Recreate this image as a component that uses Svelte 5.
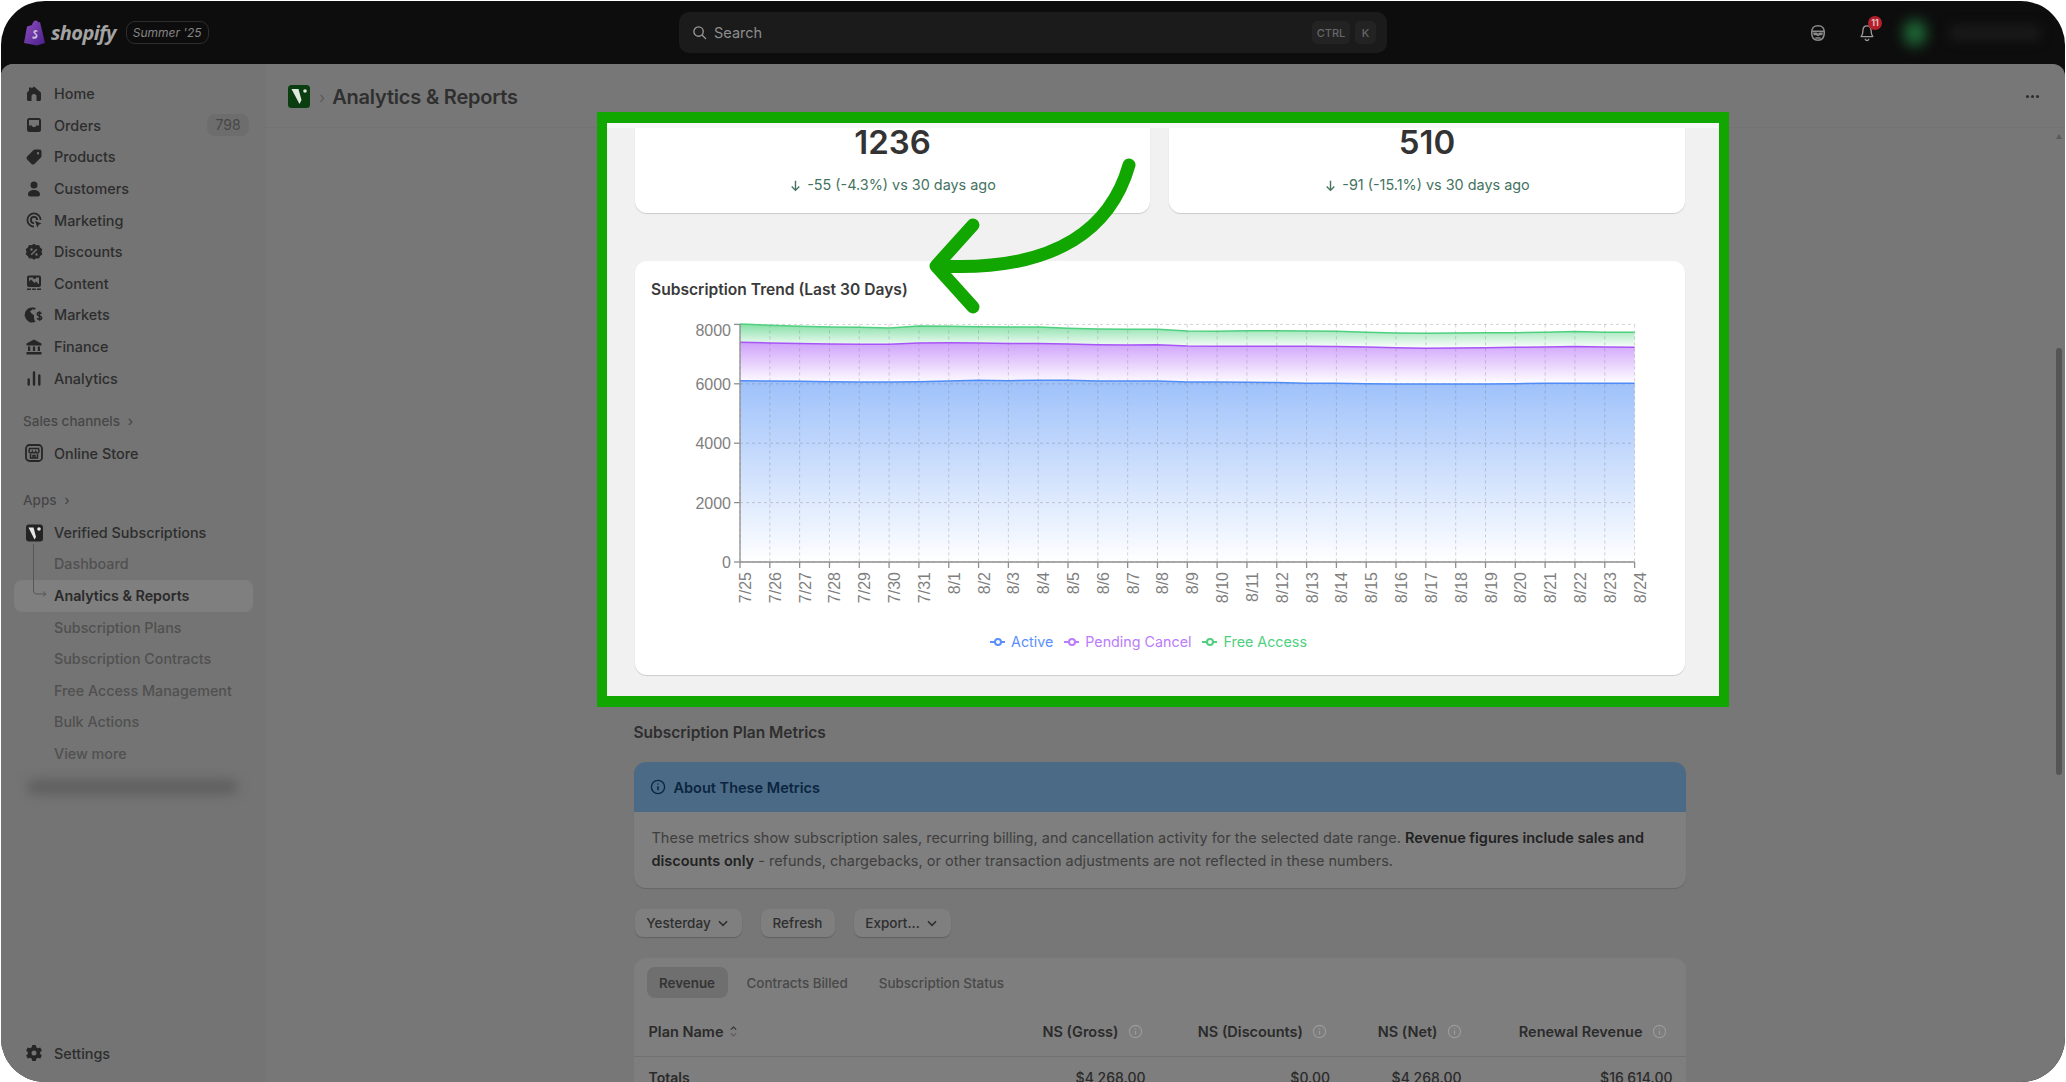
<script>
  const icons = {
    home: { d: 'M10 2.500 7.500 4.600V3.500H5v3.200L3.300 8.200c-.2.300-.3.600-.3 1v6.300c0 .8.700 1.500 1.500 1.500h3v-4.500a2.500 2.500 0 0 1 5 0V17h3c.8 0 1.500-.7 1.500-1.500V9.200c0-.4-.1-.7-.4-1z' },
    orders: { d: 'M5.500 3h9A2.500 2.500 0 0 1 17 5.500v9a2.500 2.500 0 0 1-2.500 2.500h-9A2.500 2.500 0 0 1 3 14.500v-9A2.500 2.500 0 0 1 5.500 3zM5 5v5.500h2.800l1 1.500h2.400l1-1.500H15V5z' },
    products: { d: 'M11 2.500h4.500a2 2 0 0 1 2 2V9c0 .5-.2 1-.6 1.400l-6.500 6.500a2 2 0 0 1-2.800 0l-4.500-4.500a2 2 0 0 1 0-2.800l6.500-6.500c.4-.4.9-.6 1.400-.6zM14 5a1.200 1.200 0 1 0 0 2.400A1.200 1.200 0 0 0 14 5z' },
    customers: { d: 'M10 2.500a3.500 3.500 0 1 1 0 7 3.500 3.500 0 0 1 0-7zM4 15.500c0-2.800 2.500-4.500 6-4.500s6 1.700 6 4.500c0 1-.8 2-2 2H6c-1.200 0-2-1-2-2z' },
    marketing: { d: 'M10 2.500a7.500 7.500 0 0 1 7.500 7.500h-1.800A5.700 5.700 0 1 0 10 15.700v1.800A7.500 7.500 0 0 1 10 2.500zM10 6a4 4 0 0 1 4 4h-1.800a2.200 2.200 0 1 0-2.200 2.200V14a4 4 0 0 1 0-8zM11 11l6.500 2.400-2.800 1.300-1.300 2.800z' },
    discounts: { d: 'M10 1.800l2.300 1.500 2.700-.2 1.100 2.500 2.200 1.600-.8 2.600.8 2.600-2.200 1.600-1.100 2.500-2.700-.2-2.300 1.500-2.300-1.500-2.700.2-1.100-2.500-2.200-1.600.8-2.600-.8-2.600 2.200-1.600L5 3.100l2.700.2zM12.300 6.700l-5.600 5.600 1 1 5.600-5.600zM7.500 6.300a1.200 1.200 0 1 0 0 2.400 1.200 1.200 0 0 0 0-2.400zM12.500 11.300a1.200 1.200 0 1 0 0 2.400 1.200 1.200 0 0 0 0-2.400z' },
    content: { d: 'M5 2.500h10a2 2 0 0 1 2 2v7.500a2 2 0 0 1-2 2H5a2 2 0 0 1-2-2V4.500a2 2 0 0 1 2-2zM5 7.500v1l2-2 3.500 3.500 1.500-1.500 3 3V4.500h-3a1.500 1.500 0 1 1-3 0H5zM3 15.500h4V17H3zM8.200 15.500h3.600V17H8.200zM13 15.500h4V17h-4z' },
    markets: { d: 'M9 2.500a7.500 7.500 0 0 1 3 .6c-.5.5-1 1-1.300 1.600L8.500 4.300 6 6.500l2 2.500 2 1v2.500c0 1.500.5 3 1.500 4.200A7.500 7.500 0 1 1 9 2.500z', s: 'M17.500 8.700c-.5-.8-1.300-1.200-2.200-1.200-1.100 0-2 .7-2 1.700 0 2.200 4.400 1.300 4.400 3.500 0 1-1 1.800-2.200 1.800-1 0-1.900-.5-2.400-1.300M15.500 6.300v9.400' },
    finance: { d: 'M10 2.500 2.500 6.500v2h15v-2zM4 9.500h2.200V14H4zM8.900 9.500h2.200V14H8.900zM13.800 9.500H16V14h-2.200zM2.500 15h15v2.500h-15z' },
    analytics: { d: 'M3.500 11.500a1.200 1.200 0 0 1 2.400 0v5a1.200 1.200 0 0 1-2.400 0zM8.800 4.500a1.200 1.200 0 0 1 2.400 0v12a1.200 1.200 0 0 1-2.400 0zM14.100 7.500a1.200 1.200 0 0 1 2.400 0v9a1.200 1.200 0 0 1-2.400 0z' },
    settings: { d: 'M8.300 2h3.400l.6 2.300 1.600.9 2.300-.7 1.700 3-1.700 1.600v1.800l1.700 1.600-1.700 3-2.300-.7-1.600.9-.6 2.300H8.300l-.6-2.300-1.600-.9-2.300.7-1.700-3 1.700-1.600V9.100L2.100 7.500l1.700-3 2.300.7 1.600-.9zM10 7.500a2.500 2.500 0 1 0 0 5 2.500 2.500 0 0 0 0-5z' }
  }

  const mainNav = [
    { label: 'Home', icon: 'home' },
    { label: 'Orders', icon: 'orders', badge: '798' },
    { label: 'Products', icon: 'products' },
    { label: 'Customers', icon: 'customers' },
    { label: 'Marketing', icon: 'marketing' },
    { label: 'Discounts', icon: 'discounts' },
    { label: 'Content', icon: 'content' },
    { label: 'Markets', icon: 'markets' },
    { label: 'Finance', icon: 'finance' },
    { label: 'Analytics', icon: 'analytics' }
  ]

  const subNav = ['Dashboard', 'Analytics & Reports', 'Subscription Plans', 'Subscription Contracts', 'Free Access Management', 'Bulk Actions', 'View more']

  const stats = [
    { value: '1236', delta: '-55 (-4.3%) vs 30 days ago' },
    { value: '510', delta: '-91 (-15.1%) vs 30 days ago' }
  ]

  // stacked totals per day, 7/25 to 8/24
  const activeTop = [6106, 6095, 6084, 6072, 6061, 6061, 6072, 6095, 6117, 6106, 6117, 6117, 6095, 6095, 6095, 6061, 6061, 6050, 6039, 6016, 6016, 6005, 5994, 5994, 5994, 5994, 6005, 6016, 6016, 6016, 6016]
  const pendingTop = [7397, 7374, 7352, 7340, 7329, 7329, 7374, 7385, 7374, 7352, 7352, 7340, 7318, 7307, 7318, 7273, 7262, 7262, 7262, 7262, 7251, 7240, 7217, 7195, 7206, 7217, 7228, 7240, 7251, 7240, 7228]
  const freeTop = [8014, 7969, 7935, 7913, 7901, 7879, 7946, 7935, 7924, 7913, 7913, 7868, 7845, 7834, 7834, 7778, 7767, 7789, 7789, 7778, 7767, 7733, 7711, 7700, 7711, 7722, 7722, 7733, 7756, 7733, 7733]

  const dates = []
  for (let i = 0; i < 7; i++) dates.push('7/' + (25 + i))
  for (let i = 1; i <= 24; i++) dates.push('8/' + i)

  const x0 = 105
  const stepX = 29.82
  const y0 = 252
  const px = (i) => x0 + i * stepX
  const py = (v) => y0 - v * 0.0297

  const line = (vals) => vals.map((v, i) => `${i ? 'L' : 'M'}${px(i).toFixed(1)} ${py(v).toFixed(1)}`).join(' ')
  const band = (top, bottom) => {
    const back = bottom.map((v, i) => [px(i).toFixed(1), py(v).toFixed(1)]).reverse()
    return line(top) + ' ' + back.map((p) => `L${p[0]} ${p[1]}`).join(' ') + ' Z'
  }
  const zeros = dates.map(() => 0)

  const yTicks = [8000, 6000, 4000, 2000, 0]
</script>

<div class="shell">
  <div class="window">
    <header class="topbar">
      <div class="brand">
        <svg class="bag" viewBox="0 0 22 26" width="22" height="26">
          <defs>
            <linearGradient id="bag" x1="0" y1="0" x2="1" y2="1">
              <stop offset="0" stop-color="#8f4fc0" />
              <stop offset="1" stop-color="#4a1f8c" />
            </linearGradient>
          </defs>
          <path d="M3 6.500 8 5c.6-2.500 2-4.500 4-4.500 1.300 0 2 1 2.200 2l1.800-.5L21 23l-8 2.500L0 23z" fill="url(#bag)" />
          <path d="M13.500 10.500c-.7-.5-1.500-.7-2.300-.5-1.700.3-2.500 2-1.400 3.200 1 1 2.300 1.500 1.900 2.800-.3 1-1.800 1-3 .3l-.5 2c1.500.8 4 .8 5-1 1.100-2-.5-3.300-1.600-4.300-.6-.6-.3-1.200.5-1.200.5 0 1 .1 1.300.3z" fill="#c8bcd8" />
        </svg>
        <span class="logotype">shopify</span>
        <span class="edition">Summer '25</span>
      </div>
      <div class="search">
        <svg viewBox="0 0 16 16" width="15" height="15" fill="none" stroke="#9a9a9a" stroke-width="1.400">
          <circle cx="7" cy="7" r="5" />
          <path d="m11 11 3.500 3.500" stroke-linecap="round" />
        </svg>
        <span class="search-text">Search</span>
        <span class="key key-ctrl">CTRL</span>
        <span class="key">K</span>
      </div>
      <div class="top-right">
        <svg viewBox="0 0 20 20" width="18" height="18" fill="none" stroke="#8a8a8a" stroke-width="1.800">
          <path d="M10 2c4.500 0 7 1.500 7 7.500S14.500 18 10 18s-7-2.500-7-8.500S5.500 2 10 2z" />
          <path d="M3.500 8h13" />
          <path d="M4.500 9.500h4.500l1 1.500 1-1.500h4.500l-.8 3H12l-2 1-2-1H5.300z" fill="#8a8a8a" stroke="none" />
          <path d="M7 15.500h6" />
        </svg>
        <div class="bell">
          <svg viewBox="0 0 20 22" width="18" height="20" fill="none" stroke="#9a9a9a" stroke-width="1.500">
            <path d="M10 3c-3 0-4.500 2.500-4.500 5 0 3.500-.5 5-2 7h13c-1.500-2-2-3.500-2-7 0-2.500-1.500-5-4.500-5z" stroke-linejoin="round" />
            <path d="M8 17.500a2 2 0 0 0 4 0" />
          </svg>
          <span class="bell-badge">11</span>
        </div>
        <span class="avatar"></span>
        <span class="account"></span>
      </div>
    </header>

    <div class="body">
      <aside class="sidebar">
        <nav class="nav">
          {#each mainNav as item}
            <div class="row">
              <svg class="icon" viewBox="0 0 20 20" width="20" height="20">
                <path d={icons[item.icon].d} fill-rule="evenodd" fill="currentColor" />
                {#if icons[item.icon].s}
                  <path d={icons[item.icon].s} fill="none" stroke="currentColor" stroke-width="1.500" />
                {/if}
              </svg>
              <span>{item.label}</span>
              {#if item.badge}<span class="badge">{item.badge}</span>{/if}
            </div>
          {/each}

          <div class="section-label sales">Sales channels <span class="caret">›</span></div>
          <div class="row">
            <svg class="icon" viewBox="0 0 20 20" width="20" height="20" fill="none" stroke="currentColor" stroke-width="1.500">
              <rect x="2" y="2" width="16" height="16" rx="3.500" stroke-width="1.800" />
              <path d="M5.500 5.500h9l.5 3a1.700 1.700 0 0 1-3.300.3 1.800 1.800 0 0 1-3.400 0A1.700 1.700 0 0 1 5 8.500zM6.500 11v4h7v-4M9 15v-2.500h2V15" />
            </svg>
            <span>Online Store</span>
          </div>

          <div class="section-label apps">Apps <span class="caret">›</span></div>
          <div class="row app">
            <svg class="icon" viewBox="0 0 20 20" width="20" height="20">
              <rect x="2" y="1.500" width="17" height="17" rx="3" fill="#232323" />
              <path d="M4.500 4.500h5l2.500 9.500-1.500 2.500z" fill="#e6e6e6" />
              <circle cx="15" cy="6" r="1.800" fill="#e6e6e6" />
            </svg>
            <span>Verified Subscriptions</span>
          </div>
          <div class="subnav">
            <svg class="tree" viewBox="0 0 24 56" width="24" height="56" fill="none" stroke="#565656" stroke-width="1">
              <path d="M2.500 0v46c0 3 1 4 4 4H15M12 47.500l3 2.500-3 2.500" />
            </svg>
            {#each subNav as label}
              <div class="sub" class:current={label === 'Analytics & Reports'}>{label}</div>
            {/each}
          </div>
          <div class="blurred"></div>
        </nav>
        <div class="row settings">
          <svg class="icon" viewBox="0 0 20 20" width="20" height="20">
            <path d={icons.settings.d} fill-rule="evenodd" fill="currentColor" />
          </svg>
          <span>Settings</span>
        </div>
      </aside>

      <main class="main">
        <div class="page-header">
          <svg viewBox="0 0 22 23" width="22" height="23">
            <rect width="22" height="23" rx="3.500" fill="#0a3d10" />
            <path d="M3.500 4h7l3 11-2 4z" fill="#dfe8df" />
            <circle cx="17" cy="6" r="1.800" fill="#dfe8df" />
          </svg>
          <span class="crumb">›</span>
          <h1>Analytics &amp; Reports</h1>
          <span class="dots"><i></i><i></i><i></i></span>
        </div>

        <div class="scroll-row">
          <div class="scroller">
            <div class="page">
              <h2>Subscription Plan Metrics</h2>

              <section class="banner">
                <div class="banner-head">
                  <svg viewBox="0 0 16 16" width="16" height="16" fill="none" stroke="#0b2540" stroke-width="1.300">
                    <circle cx="8" cy="8" r="6.600" />
                    <path d="M8 7.200v4M8 4.500v1" stroke-width="1.500" />
                  </svg>
                  <span>About These Metrics</span>
                </div>
                <p>These metrics show subscription sales, recurring billing, and cancellation activity for the selected date range. <b>Revenue figures include sales and discounts only</b> - refunds, chargebacks, or other transaction adjustments are not reflected in these numbers.</p>
              </section>

              <div class="actions">
                <button class="yesterday">Yesterday
                  <svg viewBox="0 0 12 12" width="14" height="14" fill="none" stroke="#2e2e2e" stroke-width="1.300"><path d="m2.500 4.500 3.500 3.500 3.500-3.500" /></svg>
                </button>
                <button class="refresh">Refresh</button>
                <button class="export">Export...
                  <svg viewBox="0 0 12 12" width="14" height="14" fill="none" stroke="#2e2e2e" stroke-width="1.300"><path d="m2.500 4.500 3.500 3.500 3.500-3.500" /></svg>
                </button>
              </div>

              <section class="table-card">
                <div class="tabs">
                  <span class="tab active">Revenue</span>
                  <span class="tab">Contracts Billed</span>
                  <span class="tab">Subscription Status</span>
                </div>
                <div class="table-row head">
                  <span class="plan">Plan Name
                    <svg viewBox="0 0 10 16" width="9" height="15" fill="none" stroke="#333" stroke-width="1.200"><path d="m2 6 3-3 3 3" /><path d="m2 10 3 3 3-3" stroke="#5c5c5c" /></svg>
                  </span>
                  {#each ['NS (Gross)', 'NS (Discounts)', 'NS (Net)', 'Renewal Revenue'] as title}
                    <span class="num">{title}
                      <svg viewBox="0 0 16 16" width="15" height="15" fill="none" stroke="#9b9b9b" stroke-width="1.200">
                        <circle cx="8" cy="8" r="6.500" /><path d="M8 7.200v4M8 4.500v1" />
                      </svg>
                    </span>
                  {/each}
                </div>
                <div class="table-row totals">
                  <span>Totals</span>
                  <span class="num">$4,268.00</span>
                  <span class="num">$0.00</span>
                  <span class="num">$4,268.00</span>
                  <span class="num">$16,614.00</span>
                </div>
              </section>
            </div>
          </div>
          <div class="scrollbar">
            <span class="up"></span>
            <span class="thumb"></span>
          </div>
        </div>
      </main>
    </div>
  </div>

  <div class="spot">
    <div class="spot-strip"></div>
    <div class="stats">
      {#each stats as stat}
        <div class="stat">
          <div class="stat-value">{stat.value}</div>
          <div class="stat-delta">
            <svg viewBox="0 0 12 12" width="13" height="13" fill="none" stroke="#44735f" stroke-width="1.300"><path d="M6 1.500v9M2.500 7 6 10.500 9.500 7" /></svg>
            {stat.delta}
          </div>
        </div>
      {/each}
    </div>

    <div class="chart-card">
      <h3>Subscription Trend (Last 30 Days)</h3>
      <svg class="chart" viewBox="0 0 1050 315" width="1050" height="315">
        <defs>
          <linearGradient id="fill-blue" x1="0" y1="0" x2="0" y2="1">
            <stop offset="0" stop-color="#3b82f6" stop-opacity="0.5" />
            <stop offset="1" stop-color="#3b82f6" stop-opacity="0" />
          </linearGradient>
          <linearGradient id="fill-purple" x1="0" y1="0" x2="0" y2="1">
            <stop offset="0" stop-color="#a855f7" stop-opacity="0.55" />
            <stop offset="1" stop-color="#a855f7" stop-opacity="0" />
          </linearGradient>
          <linearGradient id="fill-green" x1="0" y1="0" x2="0" y2="1">
            <stop offset="0" stop-color="#22c55e" stop-opacity="0.55" />
            <stop offset="1" stop-color="#22c55e" stop-opacity="0" />
          </linearGradient>
        </defs>

        <path d={band(activeTop, zeros)} fill="url(#fill-blue)" />
        <path d={band(pendingTop, activeTop)} fill="url(#fill-purple)" />
        <path d={band(freeTop, pendingTop)} fill="url(#fill-green)" />

        {#each dates as d, i}
          <line class="grid" x1={px(i)} x2={px(i)} y1={py(8000)} y2={y0} />
        {/each}
        {#each yTicks as t}
          <line class="grid" x1={x0} x2={px(30)} y1={py(t)} y2={py(t)} />
        {/each}

        <path d={line(activeTop)} class="series" stroke="#4f8cf7" />
        <path d={line(pendingTop)} class="series" stroke="#a855f7" />
        <path d={line(freeTop)} class="series" stroke="#4fd07f" />

        <line class="axis" x1={x0} x2={x0} y1={py(8000)} y2={y0} />
        <line class="axis" x1={x0} x2={px(30)} y1={y0} y2={y0} />

        {#each yTicks as t}
          <line class="axis" x1={x0 - 6} x2={x0} y1={py(t)} y2={py(t)} />
          <text class="tick" x={x0 - 9} y={t === 8000 ? py(t) + 12 : py(t) + 6} text-anchor="end">{t}</text>
        {/each}

        {#each dates as d, i}
          <line class="axis" x1={px(i)} x2={px(i)} y1={y0} y2={y0 + 6} />
          <text class="tick" text-anchor="end" transform="translate({px(i) + 11} {y0 + 10}) rotate(-90)">{d}</text>
        {/each}
      </svg>

      <div class="legend">
        <span class="item blue"><i></i>Active</span>
        <span class="item purple"><i></i>Pending Cancel</span>
        <span class="item green"><i></i>Free Access</span>
      </div>
    </div>

    <svg class="arrow" viewBox="920 150 225 170" width="225" height="170" fill="none" stroke="#12a600" stroke-width="13" stroke-linecap="round" stroke-linejoin="round">
      <path d="M1129 165C1112 225 1060 272 940 266" />
      <path d="M973 225 936 266 973 307" />
    </svg>
  </div>
</div>

<style>
  :global(body) {
    margin: 0;
    background: #fff;
    font-family: Inter, "Liberation Sans", sans-serif;
  }

  .shell {
    position: relative;
    box-sizing: border-box;
    width: 2066px;
    height: 1082px;
    padding: 1px 1px 0;
    overflow: hidden;
    background: #fff;
  }

  .window {
    display: flex;
    flex-direction: column;
    height: 100%;
    border-radius: 44px;
    overflow: hidden;
    background: #0d0d0d;
  }

  /* top bar */
  .topbar {
    display: flex;
    align-items: center;
    height: 63px;
    flex: none;
  }

  .brand {
    display: flex;
    align-items: center;
    width: 678px;
    padding-left: 23px;
    box-sizing: border-box;
  }

  .bag {
    margin-right: 5px;
  }

  .logotype {
    font-family: "Open Sans", sans-serif;
    font-weight: 700;
    font-style: italic;
    font-size: 20px;
    letter-spacing: -0.6px;
    color: #a3a3a3;
    margin-right: 10px;
  }

  .edition {
    height: 21px;
    line-height: 21px;
    padding: 0 6px;
    border: 1px solid #2e2e2e;
    border-radius: 9px;
    font-size: 12px;
    font-style: italic;
    color: #858585;
  }

  .search {
    display: flex;
    align-items: center;
    width: 708px;
    height: 41px;
    box-sizing: border-box;
    padding: 0 11px 0 13px;
    background: #1b1b1b;
    border-radius: 10px;
  }

  .search-text {
    margin-left: 7px;
    font-size: 14.500px;
    color: #8d8d8d;
    margin-right: auto;
  }

  .key {
    display: flex;
    align-items: center;
    justify-content: center;
    width: 21px;
    height: 23px;
    margin-left: 5px;
    border-radius: 5px;
    background: #232323;
    font-size: 11px;
    font-weight: 500;
    color: #666;
  }

  .key-ctrl {
    width: 38px;
  }

  .top-right {
    display: flex;
    align-items: center;
    flex: 1;
    padding-left: 422px;
  }

  .bell {
    position: relative;
    display: flex;
    margin-left: 31px;
  }

  .bell-badge {
    position: absolute;
    top: -7px;
    right: -6px;
    width: 14px;
    height: 14px;
    line-height: 14px;
    border-radius: 7px;
    background: #b3202c;
    font-size: 9px;
    font-weight: 600;
    text-align: center;
    color: #e8c4c8;
  }

  .avatar {
    width: 22px;
    height: 26px;
    margin-left: 28px;
    border-radius: 12px;
    background: #1f6b38;
    filter: blur(7px);
  }

  .account {
    width: 90px;
    height: 14px;
    margin-left: 24px;
    background: #1b1b1b;
    filter: blur(6px);
  }

  /* page body */
  .body {
    display: flex;
    flex: 1;
    min-height: 0;
    border-radius: 12px 12px 0 0;
    overflow: hidden;
    background: #777;
  }

  .sidebar {
    display: flex;
    flex-direction: column;
    flex: none;
    width: 265px;
    background: #747474;
    color: #2d2d2d;
  }

  .nav {
    padding-top: 14px;
  }

  .row {
    display: flex;
    align-items: center;
    height: 31.600px;
    padding: 0 17px 0 23px;
    font-size: 14.400px;
    font-weight: 500;
  }

  .icon {
    flex: none;
    margin-right: 10px;
    color: #262626;
  }

  .badge {
    margin-left: auto;
    width: 42px;
    height: 22px;
    line-height: 22px;
    text-align: center;
    border-radius: 8px;
    background: #6d6d6d;
    font-size: 14px;
    font-weight: 400;
    color: #474747;
  }

  .section-label {
    height: 24px;
    line-height: 24px;
    padding-left: 22px;
    font-size: 13.500px;
    font-weight: 500;
    color: #474747;
  }

  .sales {
    margin: 15.300px 0 4px;
  }

  .apps {
    margin: 19px 0 5px;
  }

  .caret {
    margin-left: 4px;
  }

  .subnav {
    position: relative;
  }

  .tree {
    position: absolute;
    left: 30px;
    top: -4px;
  }

  .sub {
    height: 31.600px;
    line-height: 31.600px;
    margin: 0 13px;
    padding-left: 40px;
    font-size: 14.300px;
    font-weight: 500;
    color: #505050;
  }

  .sub.current {
    background: #7f7f7f;
    border-radius: 8px;
    font-weight: 600;
    color: #2a2a2a;
  }

  .blurred {
    height: 14px;
    margin: 10px 28px 0 26px;
    background: #5e5e5e;
    border-radius: 7px;
    filter: blur(6px);
  }

  .settings {
    margin-top: auto;
    margin-bottom: 13px;
  }

  .main {
    display: flex;
    flex-direction: column;
    flex: 1;
    min-width: 0;
  }

  .page-header {
    display: flex;
    align-items: center;
    flex: none;
    height: 64px;
    padding: 2px 26px 0 22px;
    box-sizing: border-box;
    border-bottom: 1px solid #737373;
  }

  .crumb {
    margin: 0 7px 0 9px;
    color: #5b5b5b;
    font-size: 16px;
  }

  h1 {
    margin: 0;
    font-size: 20px;
    font-weight: 600;
    letter-spacing: -0.200px;
    color: #2f2f2f;
  }

  .dots {
    display: flex;
    gap: 2px;
    margin-left: auto;
  }

  .dots i {
    width: 3px;
    height: 3px;
    border-radius: 50%;
    background: #2d2d2d;
  }

  .scroll-row {
    display: flex;
    flex: 1;
    min-height: 0;
  }

  .scroller {
    flex: 1;
    min-width: 0;
    overflow: hidden;
  }

  .page {
    width: 1052px;
    margin: 0 auto;
    padding-top: 595px;
  }

  h2 {
    margin: 0 0 19px;
    font-size: 15.500px;
    line-height: 20px;
    font-weight: 600;
    color: #2e2e2e;
  }

  .banner {
    border-radius: 12px;
    background: #7f7f7f;
    box-shadow: 0 1px 1px #666;
    overflow: hidden;
  }

  .banner-head {
    display: flex;
    align-items: center;
    gap: 8px;
    height: 50px;
    padding-left: 16px;
    background: #4a6a85;
    font-size: 14.500px;
    font-weight: 600;
    color: #0b2540;
  }

  .banner p {
    margin: 0;
    padding: 13.500px 16px 16.500px 18px;
    font-size: 14.500px;
    line-height: 23px;
    color: #3e3e3e;
  }

  .banner b {
    font-weight: 600;
    color: #222;
  }

  .actions {
    display: flex;
    margin: 21px 0 21px 1px;
  }

  button {
    display: flex;
    align-items: center;
    justify-content: center;
    gap: 5px;
    height: 28px;
    padding: 0;
    border: 0;
    border-radius: 8px;
    background: #7f7f7f;
    box-shadow: 0 1px 1px #616161;
    font-family: inherit;
    font-size: 13.500px;
    font-weight: 500;
    color: #2e2e2e;
  }

  .yesterday {
    width: 107px;
  }

  .refresh {
    width: 74px;
    margin-left: 19px;
  }

  .export {
    width: 97px;
    margin-left: 19px;
  }

  .table-card {
    padding-top: 9px;
    border-radius: 12px 12px 0 0;
    background: #7e7e7e;
  }

  .tabs {
    display: flex;
    padding-left: 13px;
    height: 31px;
  }

  .tab {
    display: flex;
    align-items: center;
    height: 31px;
    font-size: 13.400px;
    font-weight: 500;
    color: #484848;
  }

  .tab + .tab {
    padding: 0 12px 0 19px;
  }

  .tab.active {
    width: 81px;
    box-sizing: border-box;
    justify-content: center;
    border-radius: 8px;
    background: #6f6f6f;
    font-weight: 600;
    color: #343434;
  }

  .table-row {
    display: grid;
    grid-template-columns: 1fr 185px 184.500px 131.500px 211px;
    align-items: center;
    padding: 0 13px 0 15px;
    font-size: 14.500px;
    font-weight: 600;
    color: #2b2b2b;
  }

  .head {
    height: 50px;
    margin-top: 9px;
    border-bottom: 1px solid #717171;
    box-sizing: border-box;
  }

  .head .num {
    padding-right: 3px;
  }

  .head .num:nth-child(4) {
    padding-right: 0;
  }

  .head .num:last-child {
    padding-right: 6px;
  }

  .totals {
    height: 40px;
    font-size: 14px;
  }

  .plan {
    display: flex;
    align-items: center;
    gap: 6px;
  }

  .num {
    display: flex;
    align-items: center;
    justify-content: flex-end;
    gap: 9px;
  }

  .totals .num {
    font-weight: 500;
  }

  .scrollbar {
    display: flex;
    flex-direction: column;
    align-items: center;
    flex: none;
    width: 12px;
  }

  .up {
    margin-top: 6px;
    border-left: 3px solid transparent;
    border-right: 3px solid transparent;
    border-bottom: 5px solid #5b5b5b;
  }

  .thumb {
    width: 6px;
    height: 427px;
    margin-top: 209px;
    border-radius: 3px;
    background: #555;
  }

  /* highlighted part of the screenshot, sits over the dimmed page */
  .spot {
    position: absolute;
    left: 597px;
    top: 112px;
    box-sizing: border-box;
    width: 1132px;
    height: 595px;
    border: 10px solid #12a600;
    border-top-width: 11px;
    border-bottom-width: 11px;
    background: #f1f1f1;
    overflow: hidden;
  }

  .spot-strip {
    height: 5px;
    background: #f7f7f7;
  }

  .stats {
    display: grid;
    grid-template-columns: 515px 516px;
    gap: 19px;
    padding-left: 28px;
  }

  .stat {
    height: 85px;
    box-sizing: border-box;
    background: #fff;
    border-radius: 0 0 12px 12px;
    box-shadow: 0 1px 1px #ccc;
    text-align: center;
  }

  .stat-value {
    font-size: 33px;
    line-height: 28px;
    font-weight: 600;
    color: #333;
  }

  .stat-delta {
    display: flex;
    align-items: center;
    justify-content: center;
    gap: 5px;
    margin-top: 19px;
    font-size: 14.400px;
    line-height: 20px;
    color: #44735f;
  }

  .chart-card {
    width: 1050px;
    height: 414px;
    box-sizing: border-box;
    margin: 48px 0 0 28px;
    padding-top: 19px;
    border-radius: 12px;
    background: #fff;
    box-shadow: 0 1px 1px #ccc;
  }

  h3 {
    margin: 0 0 10px 16px;
    font-size: 15.600px;
    line-height: 20px;
    font-weight: 600;
    color: #3a3a3a;
  }

  .chart {
    display: block;
  }

  .grid {
    stroke: rgba(110, 110, 110, 0.3);
    stroke-width: 1;
    stroke-dasharray: 3 3;
  }

  .series {
    fill: none;
    stroke-width: 1.500;
  }

  .axis {
    stroke: #8f8f8f;
    stroke-width: 1.300;
  }

  .tick {
    font-family: "Liberation Sans", Arial, sans-serif;
    font-size: 16px;
    fill: #7f7f7f;
  }

  .legend {
    display: flex;
    justify-content: center;
    gap: 11px;
    margin-top: 7px;
    padding-right: 23px;
    font-size: 14.300px;
    line-height: 20px;
  }

  .item {
    display: flex;
    align-items: center;
    gap: 6px;
  }

  .item i {
    position: relative;
    width: 15px;
    height: 2px;
    background: currentColor;
  }

  .item i::after {
    content: '';
    position: absolute;
    left: 4px;
    top: -3px;
    box-sizing: border-box;
    width: 8px;
    height: 8px;
    border-radius: 50%;
    border: 2px solid currentColor;
    background: #fff;
  }

  .blue {
    color: #5a90fb;
  }

  .purple {
    color: #bb7cfa;
  }

  .green {
    color: #4fd07f;
  }

  .arrow {
    position: absolute;
    left: 313px;
    top: 27px;
  }
</style>
